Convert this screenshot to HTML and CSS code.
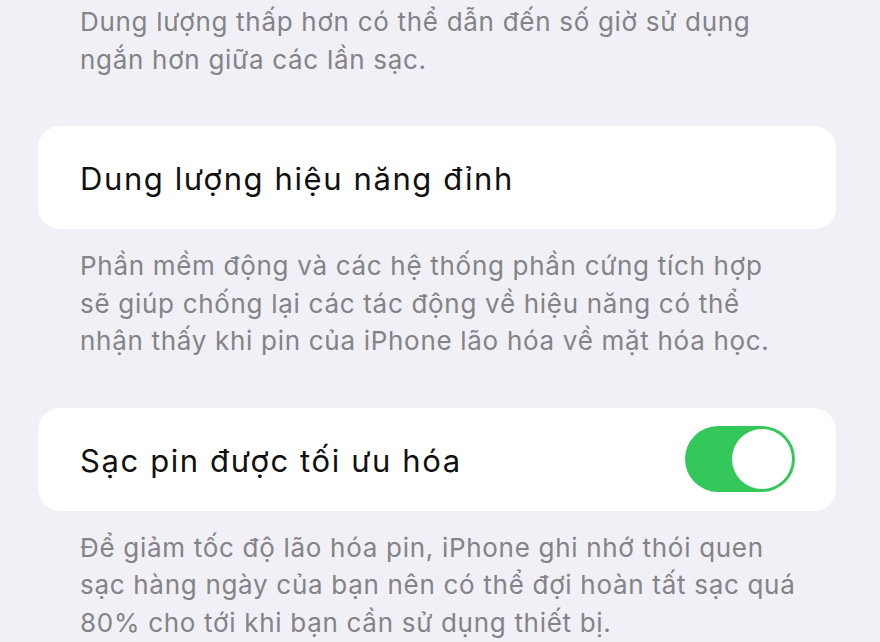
FILE: index.html
```html
<!DOCTYPE html>
<html lang="vi">
<head>
<meta charset="utf-8">
<link rel="stylesheet" href="styles.css">
</head>
<body>
<div class="page">
  <p class="note note-top">Dung lượng thấp hơn có thể dẫn đến số giờ sử dụng<br>ngắn hơn giữa các lần sạc.</p>
  <div class="card">
    <span class="label">Dung lượng hiệu năng đỉnh</span>
  </div>
  <p class="note">Phần mềm động và các hệ thống phần cứng tích hợp<br>sẽ giúp chống lại các tác động về hiệu năng có thể<br>nhận thấy khi pin của iPhone lão hóa về mặt hóa học.</p>
  <div class="card">
    <span class="label">Sạc pin được tối ưu hóa</span>
    <span class="toggle"><span class="knob"></span></span>
  </div>
  <p class="note">Để giảm tốc độ lão hóa pin, iPhone ghi nhớ thói quen<br>sạc hàng ngày của bạn nên có thể đợi hoàn tất sạc quá<br>80% cho tới khi bạn cần sử dụng thiết bị.</p>
</div>
</body>
</html>
```
FILE: styles.css
```css
html, body {
  margin: 0;
  padding: 0;
  background: #f1f0f6;
  font-family: Inter, "Noto Sans", "Liberation Sans", sans-serif;
  overflow: hidden;
}
.page {
  width: 798px;
  margin-left: 38px;
  display: flex;
  flex-direction: column;
}
.note {
  margin: 0;
  padding: 18px 0 48px 42px;
  color: #838388;
  font-size: 26px;
  letter-spacing: 0.7px;
  line-height: 37.5px;
  white-space: nowrap;
}
.note-top {
  padding-top: 3px;
}
.card {
  background: #ffffff;
  border-radius: 22px;
  height: 103px;
  display: flex;
  align-items: center;
  justify-content: space-between;
  padding: 2px 41px 0 42px;
  box-sizing: border-box;
}
.label {
  color: #111111;
  font-size: 31px;
  letter-spacing: 1.6px;
}
.toggle {
  width: 110px;
  height: 66px;
  border-radius: 33px;
  background: #34c759;
  display: flex;
  align-items: center;
  justify-content: flex-end;
  padding: 0 3px;
  box-sizing: border-box;
  margin-top: -2px;
}
.knob {
  width: 60px;
  height: 60px;
  border-radius: 50%;
  background: #ffffff;
}
```
